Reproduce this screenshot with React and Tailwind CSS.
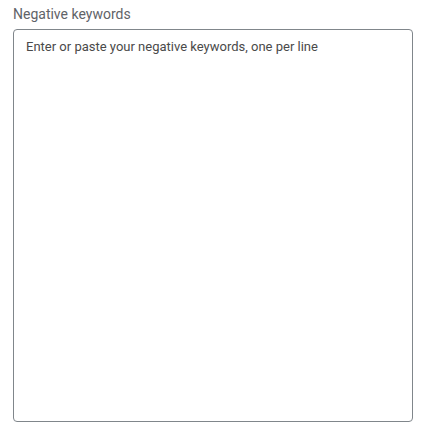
export default function App() {
  return (
    <div className="w-[431px] h-[441px] bg-white pl-[13px] pr-[18px] pt-[5px] font-[Roboto,'Liberation_Sans',sans-serif]">
      <label className="block text-[14px] leading-[18px] text-[#5f6368] mb-[6px]">Negative keywords</label>
      <textarea
        className="block w-[400px] h-[393px] border border-[#80868b] rounded-[4px] px-[12px] py-[8px] text-[13px] leading-[18px] text-[#3c4043] placeholder:text-[#4a4a4a] resize-none outline-none font-[Roboto,'Liberation_Sans',sans-serif]"
        placeholder="Enter or paste your negative keywords, one per line"
      />
    </div>
  );
}
